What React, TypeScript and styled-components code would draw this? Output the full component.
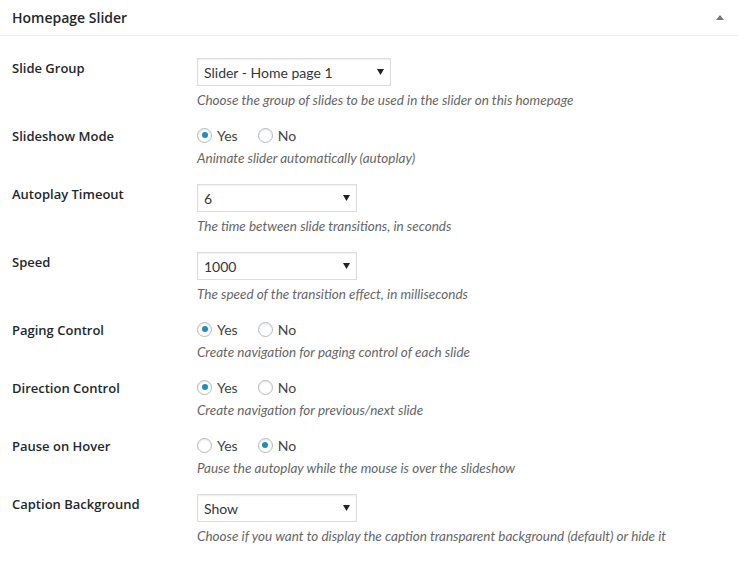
import React from 'react'
import styled, { createGlobalStyle } from 'styled-components'

const GlobalStyle = createGlobalStyle`
  body {
    margin: 0;
    background: #fff;
    font-family: Lato, "Liberation Sans", sans-serif;
    color: #444;
  }
`

const Panel = styled.div`
  background: #fff;
`

const PanelHeader = styled.div`
  display: flex;
  align-items: center;
  justify-content: space-between;
  height: 35px;
  padding: 0 14px 0 12px;
  border-bottom: 1px solid #eee;
`

const PanelTitle = styled.h2`
  margin: 0;
  font-family: "Open Sans", Lato, sans-serif;
  font-size: 14px;
  font-weight: 600;
  color: #23282d;
`

const PanelBody = styled.div`
  padding-top: 14px;
`

const FieldRow = styled.div`
  display: grid;
  grid-template-columns: 185px 1fr;
  padding-left: 12px;
`

const FieldLabel = styled.div`
  padding-top: 9px;
  font-family: "Open Sans", Lato, sans-serif;
  font-size: 13px;
  line-height: 18px;
  font-weight: 600;
  color: #23282d;
`

const FieldControl = styled.div`
  padding: 8px 0;
`

const SelectWrap = styled.div<{ $width: number }>`
  position: relative;
  width: ${p => p.$width}px;
  height: 28px;
`

const SelectBox = styled.select`
  appearance: none;
  width: 100%;
  height: 28px;
  margin: 0;
  padding: 0 24px 0 6px;
  border: 1px solid #ddd;
  border-radius: 0;
  background: #fff;
  box-shadow: inset 0 1px 2px rgba(0, 0, 0, 0.07);
  font-family: inherit;
  font-size: 14px;
  color: #32373c;
  outline: none;
`

const SelectArrow = styled.svg`
  position: absolute;
  right: 7px;
  top: 11px;
  pointer-events: none;
`

const RadioGroup = styled.div`
  display: flex;
  align-items: center;
  gap: 20px;
  height: 18px;
`

const RadioOption = styled.label`
  display: flex;
  align-items: center;
  gap: 5px;
  font-size: 14px;
  color: #444;
`

const RadioInput = styled.input`
  appearance: none;
  display: grid;
  place-items: center;
  width: 15px;
  height: 15px;
  margin: 0;
  border: 1px solid #b4b9be;
  border-radius: 50%;
  background: #fff;
  box-shadow: inset 0 1px 2px rgba(0, 0, 0, 0.1);

  &:checked::before {
    content: '';
    width: 6px;
    height: 6px;
    border-radius: 50%;
    background: #1e8cbe;
  }
`

const Description = styled.p`
  margin: 4px 0 0;
  font-size: 13.5px;
  line-height: 20px;
  font-style: italic;
  color: #666;
`

type Field =
  | { kind: 'select'; label: string; value: string; width: number; help: string }
  | { kind: 'radio'; label: string; yes: boolean; help: string }

const fields: Field[] = [
  { kind: 'select', label: 'Slide Group', value: 'Slider - Home page 1', width: 194, help: 'Choose the group of slides to be used in the slider on this homepage' },
  { kind: 'radio', label: 'Slideshow Mode', yes: true, help: 'Animate slider automatically (autoplay)' },
  { kind: 'select', label: 'Autoplay Timeout', value: '6', width: 160, help: 'The time between slide transitions, in seconds' },
  { kind: 'select', label: 'Speed', value: '1000', width: 160, help: 'The speed of the transition effect, in milliseconds' },
  { kind: 'radio', label: 'Paging Control', yes: true, help: 'Create navigation for paging control of each slide' },
  { kind: 'radio', label: 'Direction Control', yes: true, help: 'Create navigation for previous/next slide' },
  { kind: 'radio', label: 'Pause on Hover', yes: false, help: 'Pause the autoplay while the mouse is over the slideshow' },
  { kind: 'select', label: 'Caption Background', value: 'Show', width: 160, help: 'Choose if you want to display the caption transparent background (default) or hide it' },
]

function Select({ value, width }: { value: string; width: number }) {
  return (
    <SelectWrap $width={width}>
      <SelectBox defaultValue={value}>
        <option>{value}</option>
      </SelectBox>
      <SelectArrow width="7" height="6" viewBox="0 0 7 6">
        <path d="M0 0h7L3.5 6z" fill="#222" />
      </SelectArrow>
    </SelectWrap>
  )
}

function YesNo({ name, yes }: { name: string; yes: boolean }) {
  return (
    <RadioGroup>
      <RadioOption>
        <RadioInput type="radio" name={name} defaultChecked={yes} />
        Yes
      </RadioOption>
      <RadioOption>
        <RadioInput type="radio" name={name} defaultChecked={!yes} />
        No
      </RadioOption>
    </RadioGroup>
  )
}

export default function App() {
  return (
    <Panel>
      <GlobalStyle />
      <PanelHeader>
        <PanelTitle>Homepage Slider</PanelTitle>
        <svg width="8" height="5" viewBox="0 0 8 5">
          <path d="M4 0l4 5H0z" fill="#72777c" />
        </svg>
      </PanelHeader>
      <PanelBody>
        {fields.map(f => (
          <FieldRow key={f.label}>
            <FieldLabel>{f.label}</FieldLabel>
            <FieldControl>
              {f.kind === 'select' ? (
                <Select value={f.value} width={f.width} />
              ) : (
                <YesNo name={f.label} yes={f.yes} />
              )}
              <Description>{f.help}</Description>
            </FieldControl>
          </FieldRow>
        ))}
      </PanelBody>
    </Panel>
  )
}
